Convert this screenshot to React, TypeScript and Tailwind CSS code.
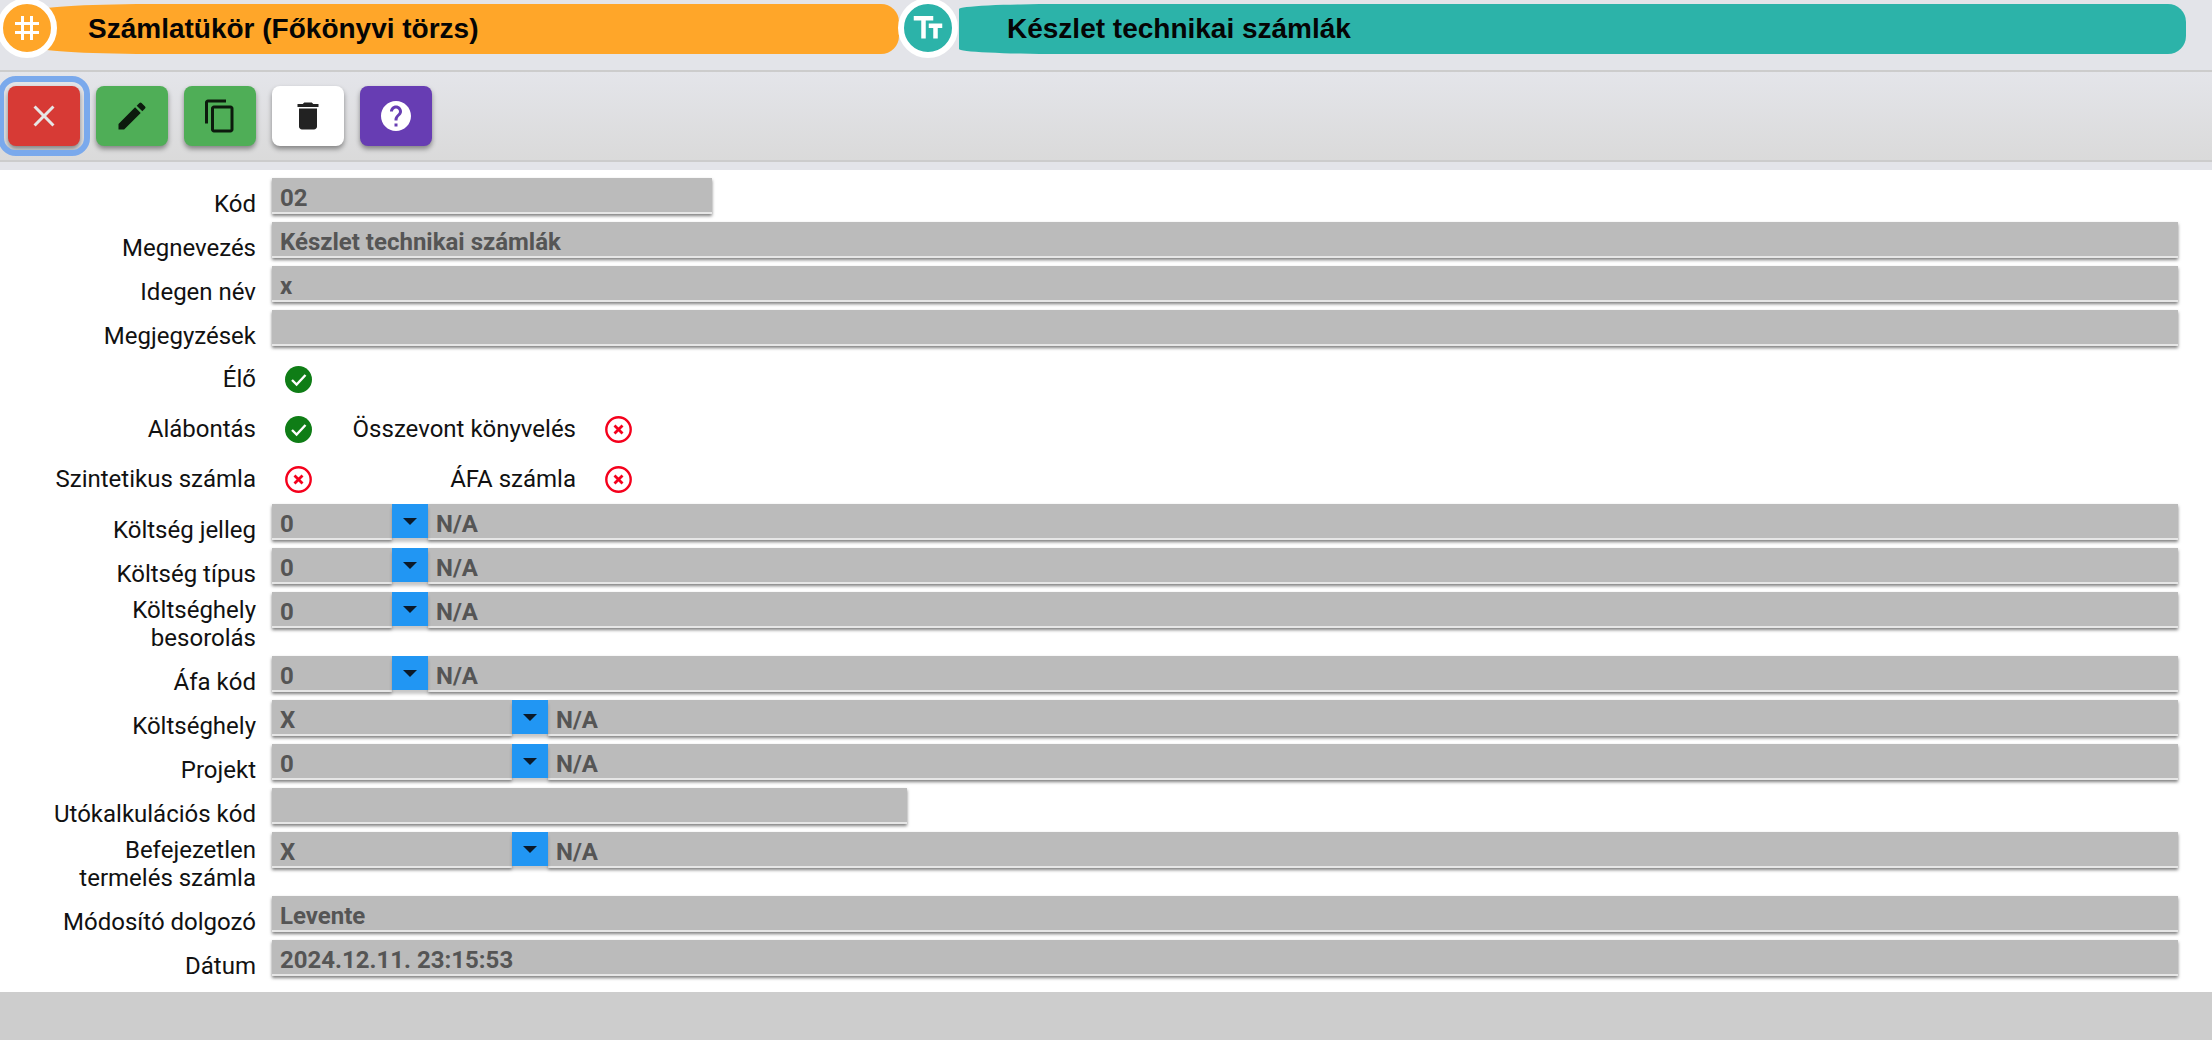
import { MdClose, MdContentCopy, MdDelete, MdEdit, MdHelp, MdTag, MdTextFields } from 'react-icons/md'
import type { ReactNode } from 'react'

function Pill({ color, barClass, icon, title }: { color: string; barClass: string; icon: ReactNode; title: string }) {
  return (
    <>
      <div className={`relative z-10 -mt-[2px] flex h-[60px] w-[60px] shrink-0 items-center justify-center rounded-full border-[6px] border-white ${color}`}>
        {icon}
      </div>
      <div className={`mt-1 flex h-[50px] items-center rounded-tr-[18px] rounded-br-[18px] font-['Liberation_Sans',sans-serif] text-[28px] font-bold text-[#050505] ${color} ${barClass}`}>
        {title}
      </div>
    </>
  )
}

function ToolButton({ className, children }: { className: string; children: ReactNode }) {
  return (
    <button className={`flex h-[60px] w-[72px] items-center justify-center rounded-lg shadow-[0_3px_5px_rgba(0,0,0,0.4)] ${className}`}>
      {children}
    </button>
  )
}

function Row({ label, children, tall }: { label: ReactNode; children: ReactNode; tall?: boolean }) {
  return (
    <div className={`flex items-start ${tall ? 'h-[64px]' : 'h-[44px]'}`}>
      <div className="w-[272px] self-end pb-1 pl-[50px] pr-[16px] text-right leading-[28px]">{label}</div>
      <div className="flex min-w-0 flex-1">{children}</div>
    </div>
  )
}

function Field({ value, className = 'flex-1' }: { value?: string; className?: string }) {
  return (
    <div className={`h-[36px] border-b-2 border-[#e6e6e6] bg-[#bbbbbb] px-2 font-bold leading-[41px] text-[#555] shadow-[0_2px_3px_rgba(0,0,0,0.5)] ${className}`}>
      {value}
    </div>
  )
}

function SelectField({ code, wide }: { code: string; wide?: boolean }) {
  return (
    <div className="flex flex-1">
      <Field value={code} className={wide ? 'w-[240px]' : 'w-[120px]'} />
      <div className="relative flex h-[34px] w-[36px] items-center justify-center bg-[#2196f3] shadow-[0_4px_3px_rgba(0,0,0,0.22)]">
        <span className="h-0 w-0 border-x-[7px] border-t-[7px] border-x-transparent border-t-[#0b1a2a]" />
      </div>
      <Field value="N/A" />
    </div>
  )
}

function CheckIcon() {
  return (
    <svg width="27" height="27" viewBox="0 0 27 27">
      <circle cx="13.5" cy="13.5" r="13.5" fill="#0f7d16" />
      <path d="M7 14l4.6 4.6L20.5 9" fill="none" stroke="#fff" strokeWidth="2.4" />
    </svg>
  )
}

function CrossIcon() {
  return (
    <svg width="27" height="27" viewBox="0 0 27 27">
      <circle cx="13.5" cy="13.5" r="12.2" fill="#fff" stroke="#f5001c" strokeWidth="2.4" />
      <path d="M9.5 9.5l8 8M17.5 9.5l-8 8" fill="none" stroke="#f5001c" strokeWidth="2.8" />
    </svg>
  )
}

function CheckRow({ label, left, second, right }: { label: string; left: ReactNode; second?: string; right?: ReactNode }) {
  return (
    <div className="flex h-[50px] items-center">
      <div className="w-[272px] pr-[16px] text-right">{label}</div>
      <div className="ml-[13px] flex w-[27px]">{left}</div>
      {second && <div className="w-[264px] text-right">{second}</div>}
      {right && <div className="ml-[29px] flex">{right}</div>}
    </div>
  )
}

export default function App() {
  return (
    <div className="flex h-[1040px] w-full flex-col overflow-hidden bg-[#cdcdcd] font-['Roboto',sans-serif] text-[24px] text-[#111]">
      {/* Breadcrumb header */}
      <div className="flex h-[70px] shrink-0 overflow-hidden bg-[#e3e4e9]">
        <div className="-ml-[3px] flex">
          <Pill
            color="bg-[#ffa629]"
            barClass="-ml-[17px] w-[859px] rounded-tl-[120px_6px] rounded-bl-[120px_6px] pl-[48px]"
            icon={<MdTag size={36} color="#fff" />}
            title="Számlatükör (Főkönyvi törzs)"
          />
          <div className="-ml-[1px] flex">
            <Pill
              color="bg-[#2cb3a9]"
              barClass="ml-[1px] w-[1227px] rounded-tl-[100px_5px] rounded-bl-[100px_5px] pl-[48px]"
              icon={<MdTextFields size={36} color="#fff" />}
              title="Készlet technikai számlák"
            />
          </div>
        </div>
      </div>

      {/* Toolbar */}
      <div className="h-[92px] shrink-0 border-y-2 border-[#cccccc] bg-linear-to-b from-[#e4e5ea] to-[#dadada]">
        <div className="flex gap-4 pl-2 pt-[14px]">
          <ToolButton className="bg-[#d73a35] outline-[6px] outline-offset-4 outline-[#7aa9ec]">
            <MdClose size={36} color="#e6e6e6" />
          </ToolButton>
          <ToolButton className="bg-[#4fae57]">
            <MdEdit size={36} color="#0c1a0d" />
          </ToolButton>
          <ToolButton className="bg-[#4fae57]">
            <MdContentCopy size={36} color="#0c1a0d" />
          </ToolButton>
          <ToolButton className="bg-white">
            <MdDelete size={36} color="#222" />
          </ToolButton>
          <ToolButton className="bg-[#673db3]">
            <MdHelp size={36} color="#fff" />
          </ToolButton>
        </div>
      </div>
      <div className="h-2 shrink-0 bg-[#e3e4e9]" />

      {/* Form */}
      <div className="h-[822px] shrink-0 bg-white pr-[34px] pt-2">
        <Row label="Kód"><Field value="02" className="w-[440px]" /></Row>
        <Row label="Megnevezés"><Field value="Készlet technikai számlák" /></Row>
        <Row label="Idegen név"><Field value="x" /></Row>
        <Row label="Megjegyzések"><Field /></Row>
        <CheckRow label="Élő" left={<CheckIcon />} />
        <CheckRow label="Alábontás" left={<CheckIcon />} second="Összevont könyvelés" right={<CrossIcon />} />
        <CheckRow label="Szintetikus számla" left={<CrossIcon />} second="ÁFA számla" right={<CrossIcon />} />
        <Row label="Költség jelleg"><SelectField code="0" /></Row>
        <Row label="Költség típus"><SelectField code="0" /></Row>
        <Row label="Költséghely besorolás" tall><SelectField code="0" /></Row>
        <Row label="Áfa kód"><SelectField code="0" /></Row>
        <Row label="Költséghely"><SelectField code="X" wide /></Row>
        <Row label="Projekt"><SelectField code="0" wide /></Row>
        <Row label="Utókalkulációs kód"><Field className="w-[635px]" /></Row>
        <Row label="Befejezetlen termelés számla" tall><SelectField code="X" wide /></Row>
        <Row label="Módosító dolgozó"><Field value="Levente" /></Row>
        <Row label="Dátum"><Field value="2024.12.11. 23:15:53" /></Row>
      </div>
    </div>
  )
}
